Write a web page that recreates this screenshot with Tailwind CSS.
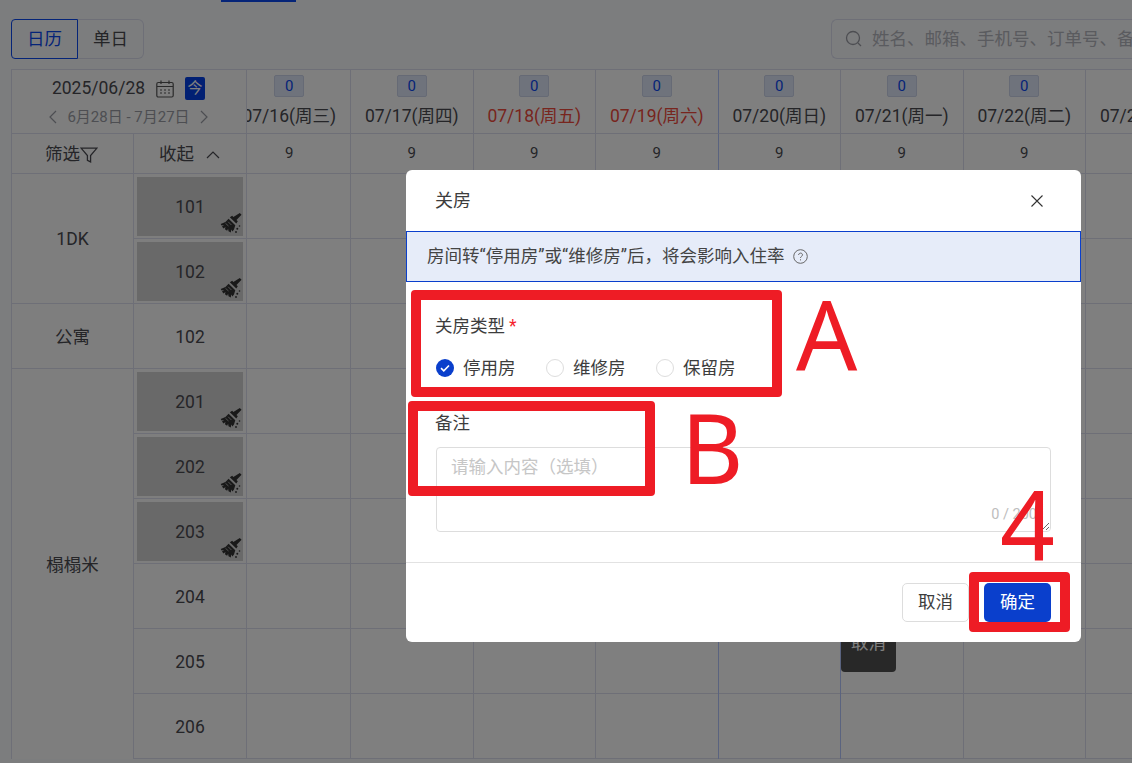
<!DOCTYPE html>
<html lang="zh-CN"><head><meta charset="utf-8">
<script src="https://cdn.jsdelivr.net/npm/@tailwindcss/browser@4"></script>
</head>
<body class="font-['Roboto','Noto_Sans_CJK_SC',sans-serif] text-[17.5px] text-[#4a4a50] bg-white">
<svg class="hidden"><defs><symbol id="broom" viewBox="0 0 22 22"><path d="M19.800 1l1.700 1.700-5 5.200 1.300 1.300-1.500 2.300-6.500-6.300 2.400-1.400 1.200 1.200z" fill="#333"/><path d="M8.600 6.800l6.700 6.500-1.300 4.200-1.600 1.900-1.300-2-.2 3-2.400-1.200-.4-2.500-1 2.100-2.200-1.500.6-2.200-2 1.300-1.500-1.800 2.200-1.500-2.600.4-.9-1.500 4.700-2.100z" fill="#333"/><path d="M5.500 11.300l3 2.700M8.200 9.800l3.200 3.200" stroke="#d2d2d2" stroke-width=".7" fill="none"/><circle cx="17.300" cy="16.700" r="1" fill="#333"/><circle cx="19.500" cy="14" r=".8" fill="#333"/><circle cx="16" cy="20" r=".9" fill="#333"/></symbol></defs></svg>
<div class="relative w-[1132px] h-[763px] overflow-hidden bg-[#f9fafd]">
  <!-- page -->
  <div class="absolute left-[221px] top-0 w-[75px] h-[2px] bg-[#0a48f0]"></div>
  <div class="flex items-start justify-between pl-[11px] pt-[19px] h-[69px]">
    <div class="flex h-[40px]">
      <div class="w-[67px] flex items-center justify-center border border-[#0a48f0] rounded-l-[4px] text-[#0a48f0]">日历</div>
      <div class="w-[66px] flex items-center justify-center border border-l-0 border-[#dcdfee] rounded-r-[6px]">单日</div>
    </div>
    <div class="w-[301px] h-[40px] border border-r-0 border-[#dcdfee] rounded-l-[6px] flex items-center pl-[13px] gap-[9px] text-[#b4b6be] whitespace-nowrap overflow-hidden">
      <svg class="shrink-0" width="18" height="18" viewBox="0 0 18 18" fill="none" stroke="#9a9ca4" stroke-width="1.300"><circle cx="8" cy="8" r="6.500"/><path d="M13 13l3 3"/></svg>
      <span>姓名、邮箱、手机号、订单号、备注</span>
    </div>
  </div>
  <div class="flex ml-[11px] border-t border-l border-[#dcdfee] h-[690px] bg-white">
    <!-- fixed left -->
    <div class="w-[235px] shrink-0 border-r border-[#dcdfee] flex flex-col bg-[#fcfcfd]">
      <div class="h-[64px] border-b border-[#dcdfee] flex flex-col items-center">
        <div class="flex items-center h-[37px] -ml-[1px]">
          <span>2025/06/28</span>
          <svg class="ml-[11px]" width="18" height="18" viewBox="0 0 18 18" fill="none" stroke="#555" stroke-width="1.200"><rect x=".8" y="2.500" width="16.400" height="14.500" rx="1.500"/><path d="M1 6.500h16M5 .5v3.500M13 .5v3.500"/><path d="M4 10h2M8 10h2M12 10h2M4 13h2M8 13h2M12 13h2"/></svg>
          <span class="ml-[11px] w-[20px] h-[23px] rounded-[2px] bg-[#0540e6] text-white text-[15px] flex items-center justify-center">今</span>
        </div>
        <div class="flex items-center text-[15px] text-[#9a9ca4] -mt-[1px] -ml-[1px]">
          <svg width="10" height="14" viewBox="0 0 10 14" fill="none" stroke="#9a9ca4" stroke-width="1.200"><path d="M8 1L2 7l6 6"/></svg>
          <span class="mx-[9px]">6月28日 - 7月27日</span>
          <svg width="10" height="14" viewBox="0 0 10 14" fill="none" stroke="#9a9ca4" stroke-width="1.200"><path d="M2 1l6 6-6 6"/></svg>
        </div>
      </div>
      <div class="h-[40px] border-b border-[#dcdfee] flex">
        <div class="w-[122px] border-r border-[#dcdfee] flex items-center justify-center pt-[2px] pr-[2px]">筛选<svg width="18" height="18" viewBox="0 0 17 17" fill="none" stroke="#4a4a50" stroke-width="1.200"><path d="M1 2h15l-6 7v6l-3-1.500V9z"/></svg></div>
        <div class="flex-1 flex items-center justify-center gap-[12px] pt-[2px] pr-[1px]">收起<svg width="14" height="8" viewBox="0 0 14 8" fill="none" stroke="#4a4a50" stroke-width="1.200"><path d="M1 7l6-6 6 6"/></svg></div>
      </div>
      <div class="flex flex-1">
        <div class="w-[122px] border-r border-[#dcdfee] flex flex-col">
          <div class="h-[130px] border-b border-[#dcdfee] flex items-center justify-center pt-[2px]">1DK</div>
          <div class="h-[65px] border-b border-[#dcdfee] flex items-center justify-center pt-[3px]">公寓</div>
          <div class="flex-1 flex items-center justify-center pt-[2px]">榻榻米</div>
        </div>
        <div class="flex-1 flex flex-col">
          <div class="h-[65px] border-b border-[#dcdfee] p-[3px] pb-[2px]"><div class="relative h-full bg-[#d2d2d2] flex items-center justify-center pt-[2px]">101<svg class="absolute right-[1px] bottom-[2px]" width="22" height="22"><use href="#broom"/></svg></div></div>
          <div class="h-[65px] border-b border-[#dcdfee] p-[3px] pb-[2px]"><div class="relative h-full bg-[#d2d2d2] flex items-center justify-center pt-[2px]">102<svg class="absolute right-[1px] bottom-[2px]" width="22" height="22"><use href="#broom"/></svg></div></div>
          <div class="h-[65px] border-b border-[#dcdfee] flex items-center justify-center pt-[3px]">102</div>
          <div class="h-[65px] border-b border-[#dcdfee] p-[3px] pb-[2px]"><div class="relative h-full bg-[#d2d2d2] flex items-center justify-center pt-[2px]">201<svg class="absolute right-[1px] bottom-[2px]" width="22" height="22"><use href="#broom"/></svg></div></div>
          <div class="h-[65px] border-b border-[#dcdfee] p-[3px] pb-[2px]"><div class="relative h-full bg-[#d2d2d2] flex items-center justify-center pt-[2px]">202<svg class="absolute right-[1px] bottom-[2px]" width="22" height="22"><use href="#broom"/></svg></div></div>
          <div class="h-[65px] border-b border-[#dcdfee] p-[3px] pb-[2px]"><div class="relative h-full bg-[#d2d2d2] flex items-center justify-center pt-[2px]">203<svg class="absolute right-[1px] bottom-[2px]" width="22" height="22"><use href="#broom"/></svg></div></div>
          <div class="h-[65px] border-b border-[#dcdfee] flex items-center justify-center pt-[3px]">204</div>
          <div class="h-[65px] border-b border-[#dcdfee] flex items-center justify-center pt-[3px]">205</div>
          <div class="h-[65px] border-b border-[#dcdfee] flex items-center justify-center pt-[3px]">206</div>
        </div>
      </div>
    </div>
    <!-- scrolled dates -->
    <div class="flex-1 overflow-hidden">
      <div class="flex -ml-[18.5px] w-max">
        <div class="w-[122.5px] flex flex-col shrink-0">
          <div class="h-[64px] border-r border-b border-[#dcdfee] flex flex-col items-center pt-[5px] whitespace-nowrap"><span class="w-[30px] h-[22px] rounded-[2px] bg-[#dfe6f8] border border-[#ccd4ea] text-[#0a48f0] text-[15px] flex items-center justify-center">0</span><span class="mt-[6px]">07/16(周三)</span></div>
          <div class="h-[40px] border-r border-b border-[#dcdfee] flex items-center justify-center text-[15px]">9</div>
          <div class="border-r border-[#dcdfee] *:h-[65px] *:border-b *:border-[#dcdfee]"><div></div><div></div><div></div><div></div><div></div><div></div><div></div><div></div><div></div></div>
        </div>
        <div class="w-[122.5px] flex flex-col shrink-0">
          <div class="h-[64px] border-r border-b border-[#dcdfee] flex flex-col items-center pt-[5px] whitespace-nowrap"><span class="w-[30px] h-[22px] rounded-[2px] bg-[#dfe6f8] border border-[#ccd4ea] text-[#0a48f0] text-[15px] flex items-center justify-center">0</span><span class="mt-[6px]">07/17(周四)</span></div>
          <div class="h-[40px] border-r border-b border-[#dcdfee] flex items-center justify-center text-[15px]">9</div>
          <div class="border-r border-[#dcdfee] *:h-[65px] *:border-b *:border-[#dcdfee]"><div></div><div></div><div></div><div></div><div></div><div></div><div></div><div></div><div></div></div>
        </div>
        <div class="w-[122.5px] flex flex-col shrink-0">
          <div class="h-[64px] border-r border-b border-[#dcdfee] flex flex-col items-center pt-[5px] whitespace-nowrap"><span class="w-[30px] h-[22px] rounded-[2px] bg-[#dfe6f8] border border-[#ccd4ea] text-[#0a48f0] text-[15px] flex items-center justify-center">0</span><span class="mt-[6px] text-[#f04a3c]">07/18(周五)</span></div>
          <div class="h-[40px] border-r border-b border-[#dcdfee] flex items-center justify-center text-[15px]">9</div>
          <div class="border-r border-[#dcdfee] *:h-[65px] *:border-b *:border-[#dcdfee]"><div></div><div></div><div></div><div></div><div></div><div></div><div></div><div></div><div></div></div>
        </div>
        <div class="w-[122.5px] flex flex-col shrink-0">
          <div class="h-[64px] border-r border-b border-b-[#dcdfee] border-r-[#b4c6ff] flex flex-col items-center pt-[5px] whitespace-nowrap"><span class="w-[30px] h-[22px] rounded-[2px] bg-[#dfe6f8] border border-[#ccd4ea] text-[#0a48f0] text-[15px] flex items-center justify-center">0</span><span class="mt-[6px] text-[#f04a3c]">07/19(周六)</span></div>
          <div class="h-[40px] border-r border-b border-b-[#dcdfee] border-r-[#b4c6ff] flex items-center justify-center text-[15px]">9</div>
          <div class="border-r border-[#b4c6ff] *:h-[65px] *:border-b *:border-[#dcdfee]"><div></div><div></div><div></div><div></div><div></div><div></div><div></div><div></div><div></div></div>
        </div>
        <div class="w-[122.5px] flex flex-col shrink-0">
          <div class="h-[64px] border-r border-b border-[#dcdfee] flex flex-col items-center pt-[5px] whitespace-nowrap"><span class="w-[30px] h-[22px] rounded-[2px] bg-[#dfe6f8] border border-[#ccd4ea] text-[#0a48f0] text-[15px] flex items-center justify-center">0</span><span class="mt-[6px]">07/20(周日)</span></div>
          <div class="h-[40px] border-r border-b border-[#dcdfee] flex items-center justify-center text-[15px]">9</div>
          <div class="border-r border-[#b4c6ff] *:h-[65px] *:border-b *:border-[#dcdfee]"><div></div><div></div><div></div><div></div><div></div><div></div><div></div><div></div><div></div></div>
        </div>
        <div class="w-[122.5px] flex flex-col shrink-0">
          <div class="h-[64px] border-r border-b border-[#dcdfee] flex flex-col items-center pt-[5px] whitespace-nowrap"><span class="w-[30px] h-[22px] rounded-[2px] bg-[#dfe6f8] border border-[#ccd4ea] text-[#0a48f0] text-[15px] flex items-center justify-center">0</span><span class="mt-[6px]">07/21(周一)</span></div>
          <div class="h-[40px] border-r border-b border-[#dcdfee] flex items-center justify-center text-[15px]">9</div>
          <div class="border-r border-[#dcdfee] *:h-[65px] *:border-b *:border-[#dcdfee]"><div></div><div></div><div></div><div></div><div></div><div></div><div></div><div></div><div></div></div>
        </div>
        <div class="w-[122.5px] flex flex-col shrink-0">
          <div class="h-[64px] border-r border-b border-[#dcdfee] flex flex-col items-center pt-[5px] whitespace-nowrap"><span class="w-[30px] h-[22px] rounded-[2px] bg-[#dfe6f8] border border-[#ccd4ea] text-[#0a48f0] text-[15px] flex items-center justify-center">0</span><span class="mt-[6px]">07/22(周二)</span></div>
          <div class="h-[40px] border-r border-b border-[#dcdfee] flex items-center justify-center text-[15px]">9</div>
          <div class="border-r border-[#dcdfee] *:h-[65px] *:border-b *:border-[#dcdfee]"><div></div><div></div><div></div><div></div><div></div><div></div><div></div><div></div><div></div></div>
        </div>
        <div class="w-[122.5px] flex flex-col shrink-0">
          <div class="h-[64px] border-r border-b border-[#dcdfee] flex flex-col items-center pt-[5px] whitespace-nowrap"><span class="w-[30px] h-[22px] rounded-[2px] bg-[#dfe6f8] border border-[#ccd4ea] text-[#0a48f0] text-[15px] flex items-center justify-center">0</span><span class="mt-[6px]">07/23(周三)</span></div>
          <div class="h-[40px] border-r border-b border-[#dcdfee] flex items-center justify-center text-[15px]">9</div>
          <div class="border-r border-[#dcdfee] *:h-[65px] *:border-b *:border-[#dcdfee]"><div></div><div></div><div></div><div></div><div></div><div></div><div></div><div></div><div></div></div>
        </div>
      </div>
    </div>
  </div>
  <!-- tooltip under the mask -->
  <div class="absolute left-[841px] top-[610px] w-[55px] h-[62px] rounded-[4px] bg-[#505050] text-white flex items-end justify-center pb-[16px]">取消</div>
  <!-- mask -->
  <div class="absolute inset-0 bg-black/50"></div>
  <!-- dialog -->
  <div class="absolute left-[406px] top-[170px] w-[675px] h-[472px] bg-white rounded-[6px] flex flex-col text-[#3d3d3d] overflow-hidden">
    <div class="h-[61px] shrink-0 flex items-center justify-between pl-[29px] pr-[38px]">
      <span class="text-[18px] -mt-[1px]">关房</span>
      <svg width="12" height="12" viewBox="0 0 12 12" fill="none" stroke="#333" stroke-width="1.100"><path d="M.5.5l11 11M11.500.5l-11 11"/></svg>
    </div>
    <div class="h-[51px] shrink-0 border border-[#0a3fcc] bg-[#e6ecf9] flex items-center pl-[20px] gap-[9px] text-[#444]">
      <span>房间转“停用房”或“维修房”后，将会影响入住率</span>
      <svg width="15" height="15" viewBox="0 0 15 15" fill="none" stroke="#666" stroke-width="1"><circle cx="7.500" cy="7.500" r="6.800"/><path d="M5.600 6c0-2.500 3.900-2.500 3.900-.1 0 1.400-2 1.500-2 3"/><path d="M7.500 10.300v1.100"/></svg>
    </div>
    <div class="flex-1 pl-[30px] pr-[30px] pt-[32px]">
      <div class="h-[24px] flex items-center -ml-[1px]">关房类型<span class="ml-[4px] text-[#f5222d]">*</span></div>
      <div class="h-[24px] mt-[18px] flex items-center">
        <span class="flex items-center w-[110px] gap-[9px]"><svg width="18" height="18" viewBox="0 0 18 18"><circle cx="9" cy="9" r="9" fill="#0a3fcc"/><path d="M5 9.200l2.800 2.600L13 6.500" fill="none" stroke="#fff" stroke-width="1.600"/></svg>停用房</span>
        <span class="flex items-center w-[110px] gap-[9px]"><span class="w-[18px] h-[18px] rounded-full border border-[#ddd]"></span>维修房</span>
        <span class="flex items-center gap-[9px]"><span class="w-[18px] h-[18px] rounded-full border border-[#ddd]"></span>保留房</span>
      </div>
      <div class="h-[24px] mt-[31px] flex items-center -ml-[1px]">备注</div>
      <div class="relative mt-[12px] h-[85px]">
        <textarea class="block w-full h-full border border-[#ddd] rounded-[4px] px-[14px] py-[6px] outline-none resize-y placeholder:text-[#c6c6c6]" placeholder="请输入内容（选填）"></textarea>
        <span class="absolute right-[14px] bottom-[6px] text-[14.500px] text-[#bdbdbd]">0 / 200</span>
      </div>
    </div>
    <div class="h-[80px] shrink-0 border-t border-[#e2e2e2] flex items-center justify-end gap-[15px] pr-[30px]">
      <button class="w-[67px] h-[39px] border border-[#ddd] rounded-[5px]">取消</button>
      <button class="w-[67px] h-[39px] rounded-[5px] bg-[#0a3fcc] text-white">确定</button>
    </div>
  </div>
  <!-- red annotations -->
  <div class="absolute left-[411px] top-[290px] w-[371px] h-[107px] border-[10px] border-[#ee1c25] rounded-[4px]"></div>
  <div class="absolute left-[408px] top-[401px] w-[247px] h-[95px] border-[10px] border-[#ee1c25] rounded-[4px]"></div>
  <div class="absolute left-[969px] top-[572px] w-[101px] h-[60px] border-[10px] border-[#ee1c25] rounded-[4px]"></div>
  <span class="absolute left-[796px] top-[278px] text-[96px] leading-[110px] font-['Noto_Sans',sans-serif] text-[#ee1c25]">A</span>
  <span class="absolute left-[681px] top-[392px] text-[96px] leading-[110px] font-['Noto_Sans',sans-serif] text-[#ee1c25]">B</span>
  <span class="absolute left-[1000px] top-[469px] text-[96px] leading-[110px] font-['Noto_Sans',sans-serif] text-[#ee1c25]">4</span>
</div>
</body></html>
